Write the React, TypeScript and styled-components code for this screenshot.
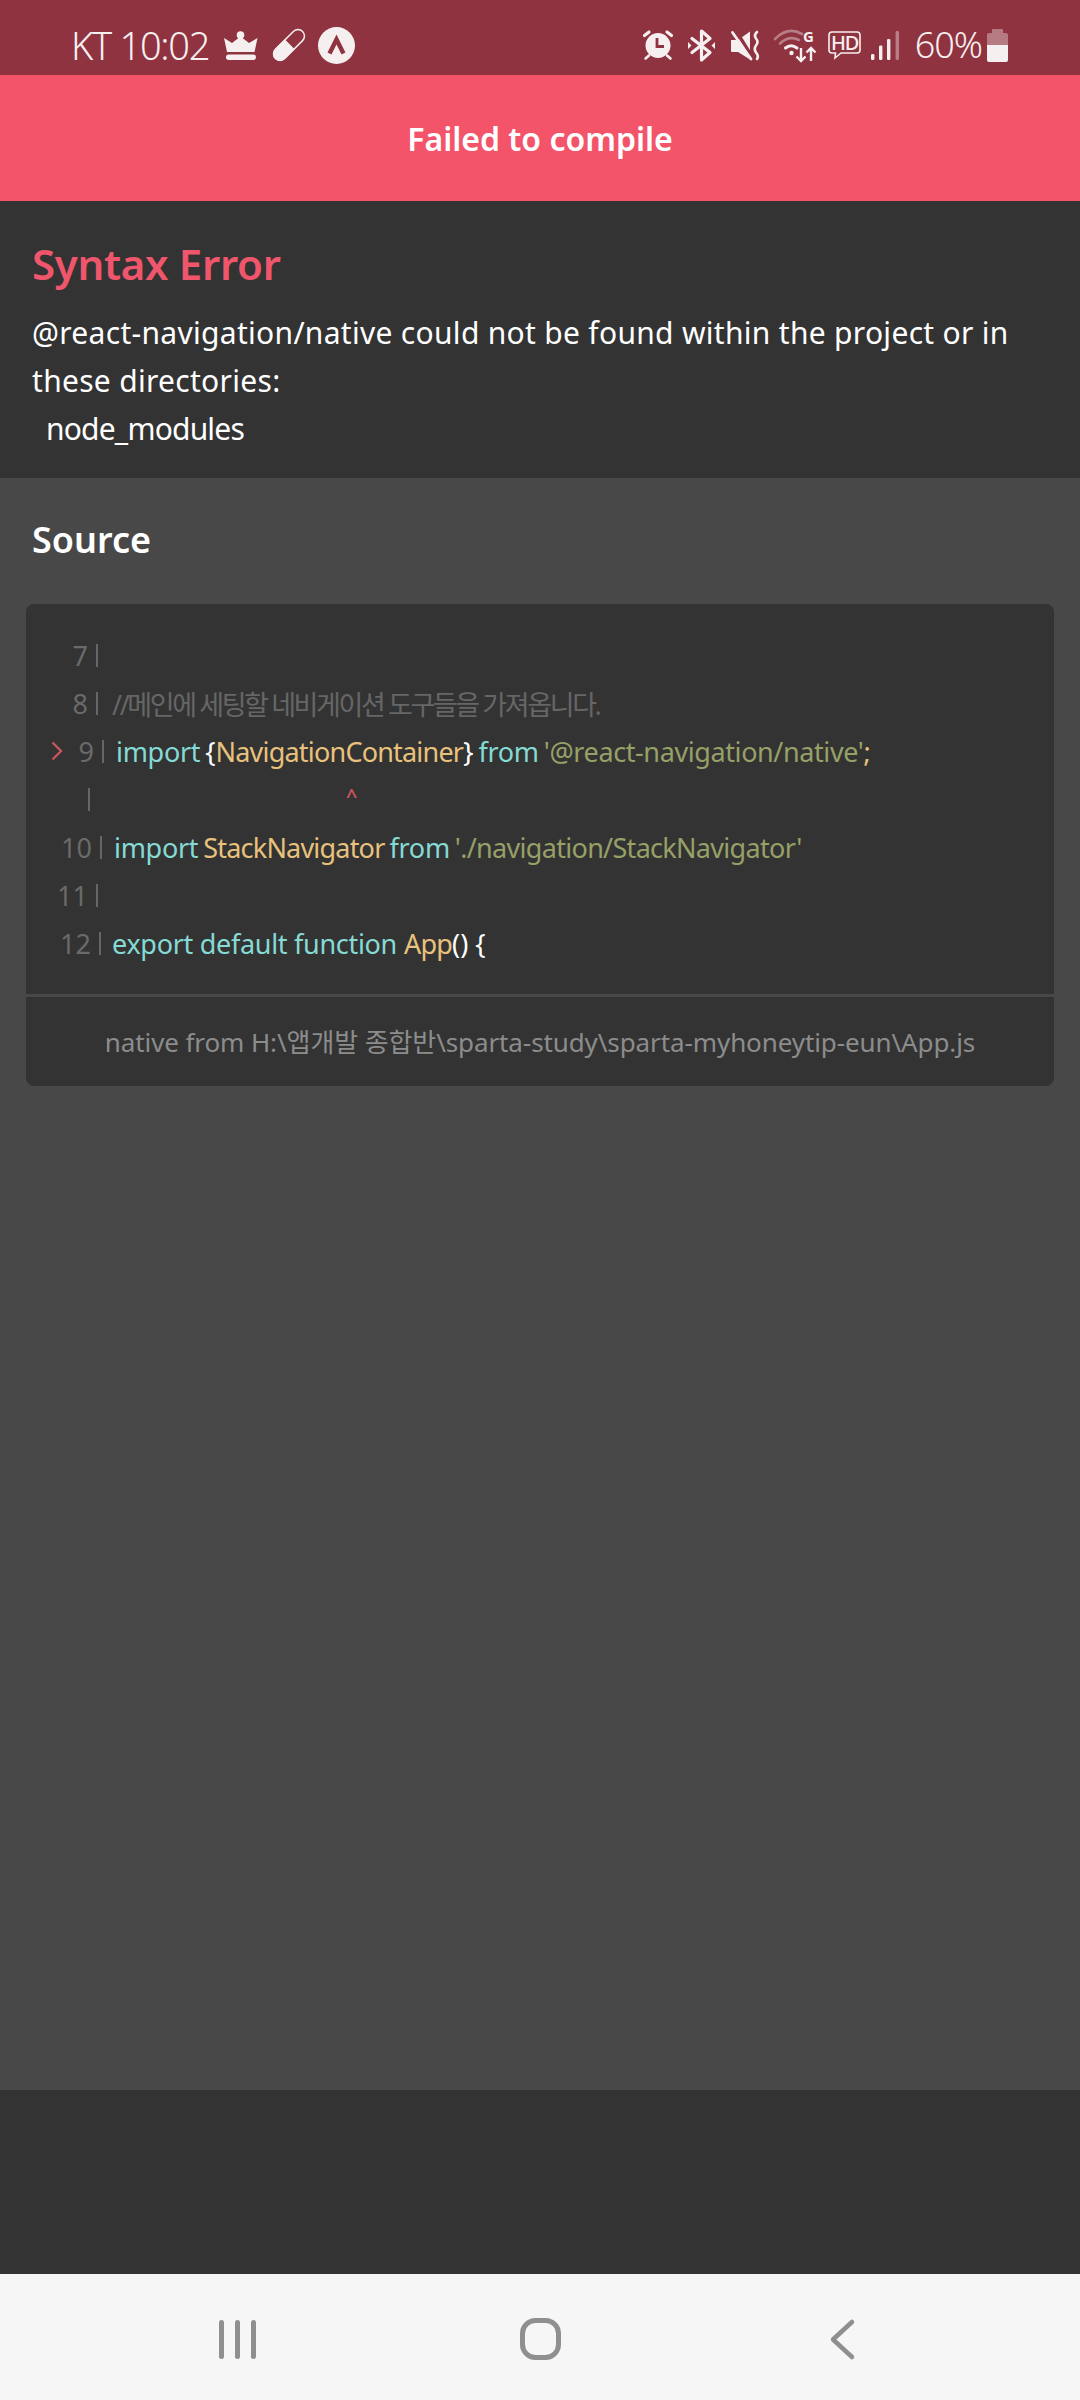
import React from 'react'
import styled, { createGlobalStyle } from 'styled-components'

const GlobalStyle = createGlobalStyle`
  html, body {
    margin: 0;
    padding: 0;
    background: #333333;
  }
  * {
    box-sizing: border-box;
  }
`

const FONT = `"Noto Sans", "Noto Sans CJK KR", sans-serif`
const ICON = '#f6eff0'
const BAR = '#8f3340'

const Screen = styled.div`
  width: 1080px;
  height: 2400px;
  display: flex;
  flex-direction: column;
  font-family: ${FONT};
  overflow: hidden;
`

const StatusBar = styled.div`
  height: 75px;
  flex: none;
  display: flex;
  align-items: center;
  padding: 15px 72px 0 71px;
  background: ${BAR};
  color: ${ICON};
`

const StatusLeft = styled.div`
  display: flex;
  align-items: center;
`

const StatusRight = styled.div`
  display: flex;
  align-items: center;
  margin-left: auto;
`

const Clock = styled.span`
  font-size: 38px;
  font-weight: 300;
  line-height: 40px;
  margin-right: 15px;
  letter-spacing: -1.3px;
`

const Percent = styled.span`
  font-size: 36px;
  font-weight: 300;
  line-height: 40px;
  margin: 0 5px 0 16px;
  letter-spacing: -1px;
`

const Glyph = styled.svg<{ $gap?: number }>`
  display: block;
  flex: none;
  overflow: visible;
  margin-right: ${({ $gap }) => $gap ?? 0}px;
`

const Header = styled.div`
  height: 126px;
  flex: none;
  display: flex;
  align-items: center;
  justify-content: center;
  background: #f4546a;
  color: #ffffff;
  font-size: 32px;
  font-weight: 600;
`

const ErrorPanel = styled.section`
  flex: none;
  padding: 39px 32px 25px;
  background: #333333;
`

const ErrorTitle = styled.h1`
  margin: 0 0 21px;
  font-size: 42px;
  line-height: 48px;
  font-weight: 600;
  letter-spacing: -0.3px;
  color: #f0566b;
`

const ErrorText = styled.p`
  margin: 0;
  font-size: 30px;
  line-height: 48px;
  letter-spacing: 0.3px;
  color: #ffffff;
`

const ModuleName = styled(ErrorText)`
  padding-left: 14px;
  letter-spacing: -0.8px;
`

const SourcePanel = styled.section`
  flex: 1;
  padding: 40px 26px 0;
  background: #484848;
`

const SourceTitle = styled.h2`
  margin: 0 0 42px;
  padding-left: 6px;
  font-size: 36px;
  line-height: 44px;
  font-weight: 600;
  color: #ffffff;
`

const CodeCard = styled.div`
  background: #333333;
  border-radius: 8px;
  overflow: hidden;
`

const CodeBlock = styled.div`
  padding: 27px 0 27px;
  border-bottom: 3px solid #484848;
`

const CodeLine = styled.div`
  display: flex;
  height: 48px;
  align-items: center;
  font-size: 27px;
  white-space: pre;
`

const Gutter = styled.span<{ $bar: number }>`
  position: relative;
  flex: none;
  width: ${({ $bar }) => $bar - 26}px;
  height: 100%;
  display: flex;
  align-items: center;
  justify-content: flex-end;
  padding-right: 10px;
  color: #6a6a6a;
  &::after {
    content: '';
    position: absolute;
    right: 0;
    top: 13px;
    width: 2px;
    height: 23px;
    background: #666666;
  }
`

const Marker = styled.svg`
  position: absolute;
  left: 25px;
  top: 14px;
`

const Code = styled.span<{ $indent: number }>`
  padding-left: ${({ $indent }) => $indent}px;
`

const ImportCode = styled(Code)`
  word-spacing: -2px;
`

const Keyword = styled.span`
  color: #86dad5;
  letter-spacing: -0.3px;
`
const Name = styled.span`
  color: #e8c27c;
  letter-spacing: -0.8px;
`
const Str = styled.span<{ $spacing: number }>`
  color: #96a067;
  letter-spacing: ${({ $spacing }) => $spacing}px;
`
const Punct = styled.span`
  color: #ffffff;
`
const Comment = styled.span`
  color: #666666;
  letter-spacing: -2.4px;
`
const Caret = styled.span`
  color: #c8555c;
  font-size: 20px;
  font-weight: 600;
  line-height: 20px;
  display: inline-block;
  transform: translateY(-7px);
`

const CodeFooter = styled.div`
  height: 89px;
  display: flex;
  align-items: center;
  justify-content: center;
  padding-bottom: 2px;
  font-size: 26px;
  letter-spacing: -0.1px;
  color: #8c8c8c;
`

const BottomStrip = styled.div`
  height: 184px;
  flex: none;
  background: #333333;
`

const NavBar = styled.nav`
  height: 126px;
  flex: none;
  display: grid;
  grid-template-columns: repeat(3, 303px);
  justify-content: center;
  justify-items: center;
  align-items: center;
  padding-top: 4px;
  background: #f6f6f6;
`

function Crown() {
  return (
    <Glyph width="34" height="29" viewBox="0 0 34 29" $gap={15}>
      <circle cx="16.5" cy="4" r="3.8" fill={ICON} />
      <path d="M0 7 L8 12 L16.5 5.5 L25 12 L33.500 7 L30.5 21 H3 Z" fill={ICON} />
      <rect x="2" y="23.5" width="30" height="5.5" rx="2.7" fill={ICON} />
    </Glyph>
  )
}

function Pill() {
  return (
    <Glyph width="32" height="32" viewBox="0 0 32 32" $gap={13}>
      <g transform="rotate(-45 16 16)">
        <rect x="-3.2" y="9.5" width="38.400" height="13" rx="6.5" fill="none" stroke={ICON} strokeWidth="1.5" />
        <path d="M17 9 H3.300 a7 7 0 0 0 0 14 H17 Z" fill={ICON} />
      </g>
    </Glyph>
  )
}

function Expo() {
  return (
    <Glyph width="37" height="37" viewBox="0 0 37 37">
      <circle cx="18.5" cy="18.5" r="18.5" fill={ICON} />
      <path d="M11.5 26.500 L18.500 12.500 L25.500 26.500" fill="none" stroke={BAR} strokeWidth="4.4" />
    </Glyph>
  )
}

function Alarm() {
  return (
    <Glyph width="30" height="30" viewBox="0 0 30 30" $gap={15}>
      <circle cx="15" cy="15.5" r="12.5" fill={ICON} />
      <path d="M14 8 V16.500 H21" fill="none" stroke={BAR} strokeWidth="2.8" />
      <path d="M1.5 5.500 L6 2 M28.500 5.500 L24 2" stroke={ICON} strokeWidth="3.2" strokeLinecap="round" />
      <path d="M2.500 28.500 L6 25.500 M27.500 28.500 L24 25.500" stroke={ICON} strokeWidth="2.6" strokeLinecap="round" />
    </Glyph>
  )
}

function Bluetooth() {
  return (
    <Glyph width="27" height="33" viewBox="0 0 27 33" $gap={16}>
      <path d="M4 9.500 L22 23.500 L13.500 31 V2 L22 9.500 L4 23.500" fill="none" stroke={ICON} strokeWidth="3.2" strokeLinejoin="round" strokeLinecap="round" />
      <path d="M0 13 L3.500 16.500 L0 20 Z M27 13 L23.500 16.500 L27 20 Z" fill={ICON} />
    </Glyph>
  )
}

function Mute() {
  return (
    <Glyph width="29" height="29" viewBox="0 0 29 29" $gap={14}>
      <path d="M0 9 H7 L19 0.500 V28.500 L7 21 H1 Q0 21 0 20 Z" fill={ICON} />
      <path d="M4.500 -1 L23 29" stroke={BAR} strokeWidth="3.400" />
      <path d="M1.500 1.500 L20 28" stroke={ICON} strokeWidth="2.800" strokeLinecap="round" />
      <path d="M26 1 Q22.500 4 25 7.500 Q28 11 25 14.500 Q22.500 18 25 21.500 Q28 25 26 28" fill="none" stroke={ICON} strokeWidth="2.600" strokeLinecap="round" />
    </Glyph>
  )
}

function Wifi() {
  return (
    <Glyph width="42" height="33" viewBox="0 0 42 33" $gap={12}>
      <path d="M1 10 Q14 -3 28 5" fill="none" stroke={ICON} strokeOpacity="0.4" strokeWidth="2.6" strokeLinecap="round" />
      <path d="M6 14.500 Q15 6 25 11" fill="none" stroke={ICON} strokeOpacity="0.4" strokeWidth="2.6" strokeLinecap="round" />
      <path d="M11.500 19 Q17 14.500 23 19" fill="none" stroke={ICON} strokeWidth="3" strokeLinecap="round" />
      <circle cx="17.500" cy="24" r="2.200" fill={ICON} />
      <path d="M27 19 V32 M22.500 27.500 L27 32 L31.500 27.500 M37 32 V19 M32.500 23.500 L37 19 L41.500 23.500" fill="none" stroke={ICON} strokeWidth="2.400" />
      <text x="29" y="13" fontSize="15" fontWeight="700" fontFamily="'Noto Sans', sans-serif" fill={ICON}>G</text>
    </Glyph>
  )
}

function Hd() {
  return (
    <Glyph width="33" height="28" viewBox="0 0 33 28" $gap={10}>
      <path d="M4 1 H29 Q32 1 32 4 V19 Q32 22 29 22 H13 L7 27 L7.500 22 H4 Q1 22 1 19 V4 Q1 1 4 1 Z" fill="none" stroke={ICON} strokeWidth="1.600" />
      <text x="16.500" y="18.500" textAnchor="middle" fontSize="20" fontWeight="500" letterSpacing="-1.200" fontFamily="'Noto Sans', sans-serif" fill={ICON}>HD</text>
    </Glyph>
  )
}

function Signal() {
  return (
    <Glyph width="28" height="29" viewBox="0 0 28 29">
      <rect x="0" y="23" width="3.400" height="6" rx="1.200" fill={ICON} />
      <rect x="8" y="14.500" width="3.400" height="14.500" rx="1.200" fill={ICON} />
      <rect x="16" y="8" width="3.400" height="21" rx="1.200" fill={ICON} />
      <rect x="24.600" y="0" width="3.400" height="29" rx="1.200" fill={ICON} fillOpacity="0.4" />
    </Glyph>
  )
}

function Battery() {
  return (
    <Glyph width="21" height="33" viewBox="0 0 21 33">
      <path d="M6 0 H15 Q16 0 16 1 V4 H19 Q21 4 21 6 V16 H0 V6 Q0 4 2 4 H5 V1 Q5 0 6 0 Z" fill={ICON} fillOpacity="0.38" />
      <path d="M0 16 H21 V31 Q21 33 19 33 H2 Q0 33 0 31 Z" fill={ICON} />
    </Glyph>
  )
}

function Recents() {
  return (
    <Glyph width="37" height="39" viewBox="0 0 37 39">
      <g fill="#8f8f8f">
        <rect x="0" y="0" width="5" height="39" rx="2.500" />
        <rect x="16" y="0" width="5" height="39" rx="2.500" />
        <rect x="32" y="0" width="5" height="39" rx="2.500" />
      </g>
    </Glyph>
  )
}

function Home() {
  return (
    <Glyph width="41" height="42" viewBox="0 0 41 42">
      <rect x="2.500" y="2.500" width="36" height="37" rx="13" fill="none" stroke="#8f8f8f" strokeWidth="5" />
    </Glyph>
  )
}

function Back() {
  return (
    <Glyph width="27" height="39" viewBox="0 0 27 39">
      <path d="M22 2 L3 19.500 L22 37" fill="none" stroke="#8f8f8f" strokeWidth="4.500" strokeLinecap="round" strokeLinejoin="round" />
    </Glyph>
  )
}

export default function App() {
  return (
    <Screen>
      <GlobalStyle />
      <StatusBar>
        <StatusLeft>
          <Clock>KT 10:02</Clock>
          <Crown />
          <Pill />
          <Expo />
        </StatusLeft>
        <StatusRight>
          <Alarm />
          <Bluetooth />
          <Mute />
          <Wifi />
          <Hd />
          <Signal />
          <Percent>60%</Percent>
          <Battery />
        </StatusRight>
      </StatusBar>

      <Header>Failed to compile</Header>

      <ErrorPanel>
        <ErrorTitle>Syntax Error</ErrorTitle>
        <ErrorText>@react-navigation/native could not be found within the project or in these directories:</ErrorText>
        <ModuleName>node_modules</ModuleName>
      </ErrorPanel>

      <SourcePanel>
        <SourceTitle>Source</SourceTitle>
        <CodeCard>
          <CodeBlock>
            <CodeLine>
              <Gutter $bar={98}>7</Gutter>
            </CodeLine>
            <CodeLine>
              <Gutter $bar={98}>8</Gutter>
              <Code $indent={14}><Comment>//메인에 세팅할 네비게이션 도구들을 가져옵니다.</Comment></Code>
            </CodeLine>
            <CodeLine>
              <Gutter $bar={104}>
                <Marker width="12" height="20" viewBox="0 0 12 20">
                  <path d="M1.500 1.500 L10 10 L1.500 18.500" fill="none" stroke="#c8555c" strokeWidth="2.400" />
                </Marker>
                9
              </Gutter>
              <ImportCode $indent={12}>
                <Keyword>import</Keyword> <Punct>{'{'}</Punct><Name>NavigationContainer</Name><Punct>{'}'}</Punct> <Keyword>from</Keyword> <Str $spacing={-0.4}>'@react-navigation/native'</Str><Name>;</Name>
              </ImportCode>
            </CodeLine>
            <CodeLine>
              <Gutter $bar={90} />
              <Code $indent={256}><Caret>^</Caret></Code>
            </CodeLine>
            <CodeLine>
              <Gutter $bar={102}>10</Gutter>
              <ImportCode $indent={12}>
                <Keyword>import</Keyword> <Name>StackNavigator</Name> <Keyword>from</Keyword> <Str $spacing={-0.7}>'./navigation/StackNavigator'</Str>
              </ImportCode>
            </CodeLine>
            <CodeLine>
              <Gutter $bar={98}>11</Gutter>
            </CodeLine>
            <CodeLine>
              <Gutter $bar={101}>12</Gutter>
              <Code $indent={11}>
                <Keyword>export default function</Keyword> <Name>App</Name><Punct>() {'{'}</Punct>
              </Code>
            </CodeLine>
          </CodeBlock>
          <CodeFooter>native from H:\앱개발 종합반\sparta-study\sparta-myhoneytip-eun\App.js</CodeFooter>
        </CodeCard>
      </SourcePanel>

      <BottomStrip />

      <NavBar>
        <Recents />
        <Home />
        <Back />
      </NavBar>
    </Screen>
  )
}
